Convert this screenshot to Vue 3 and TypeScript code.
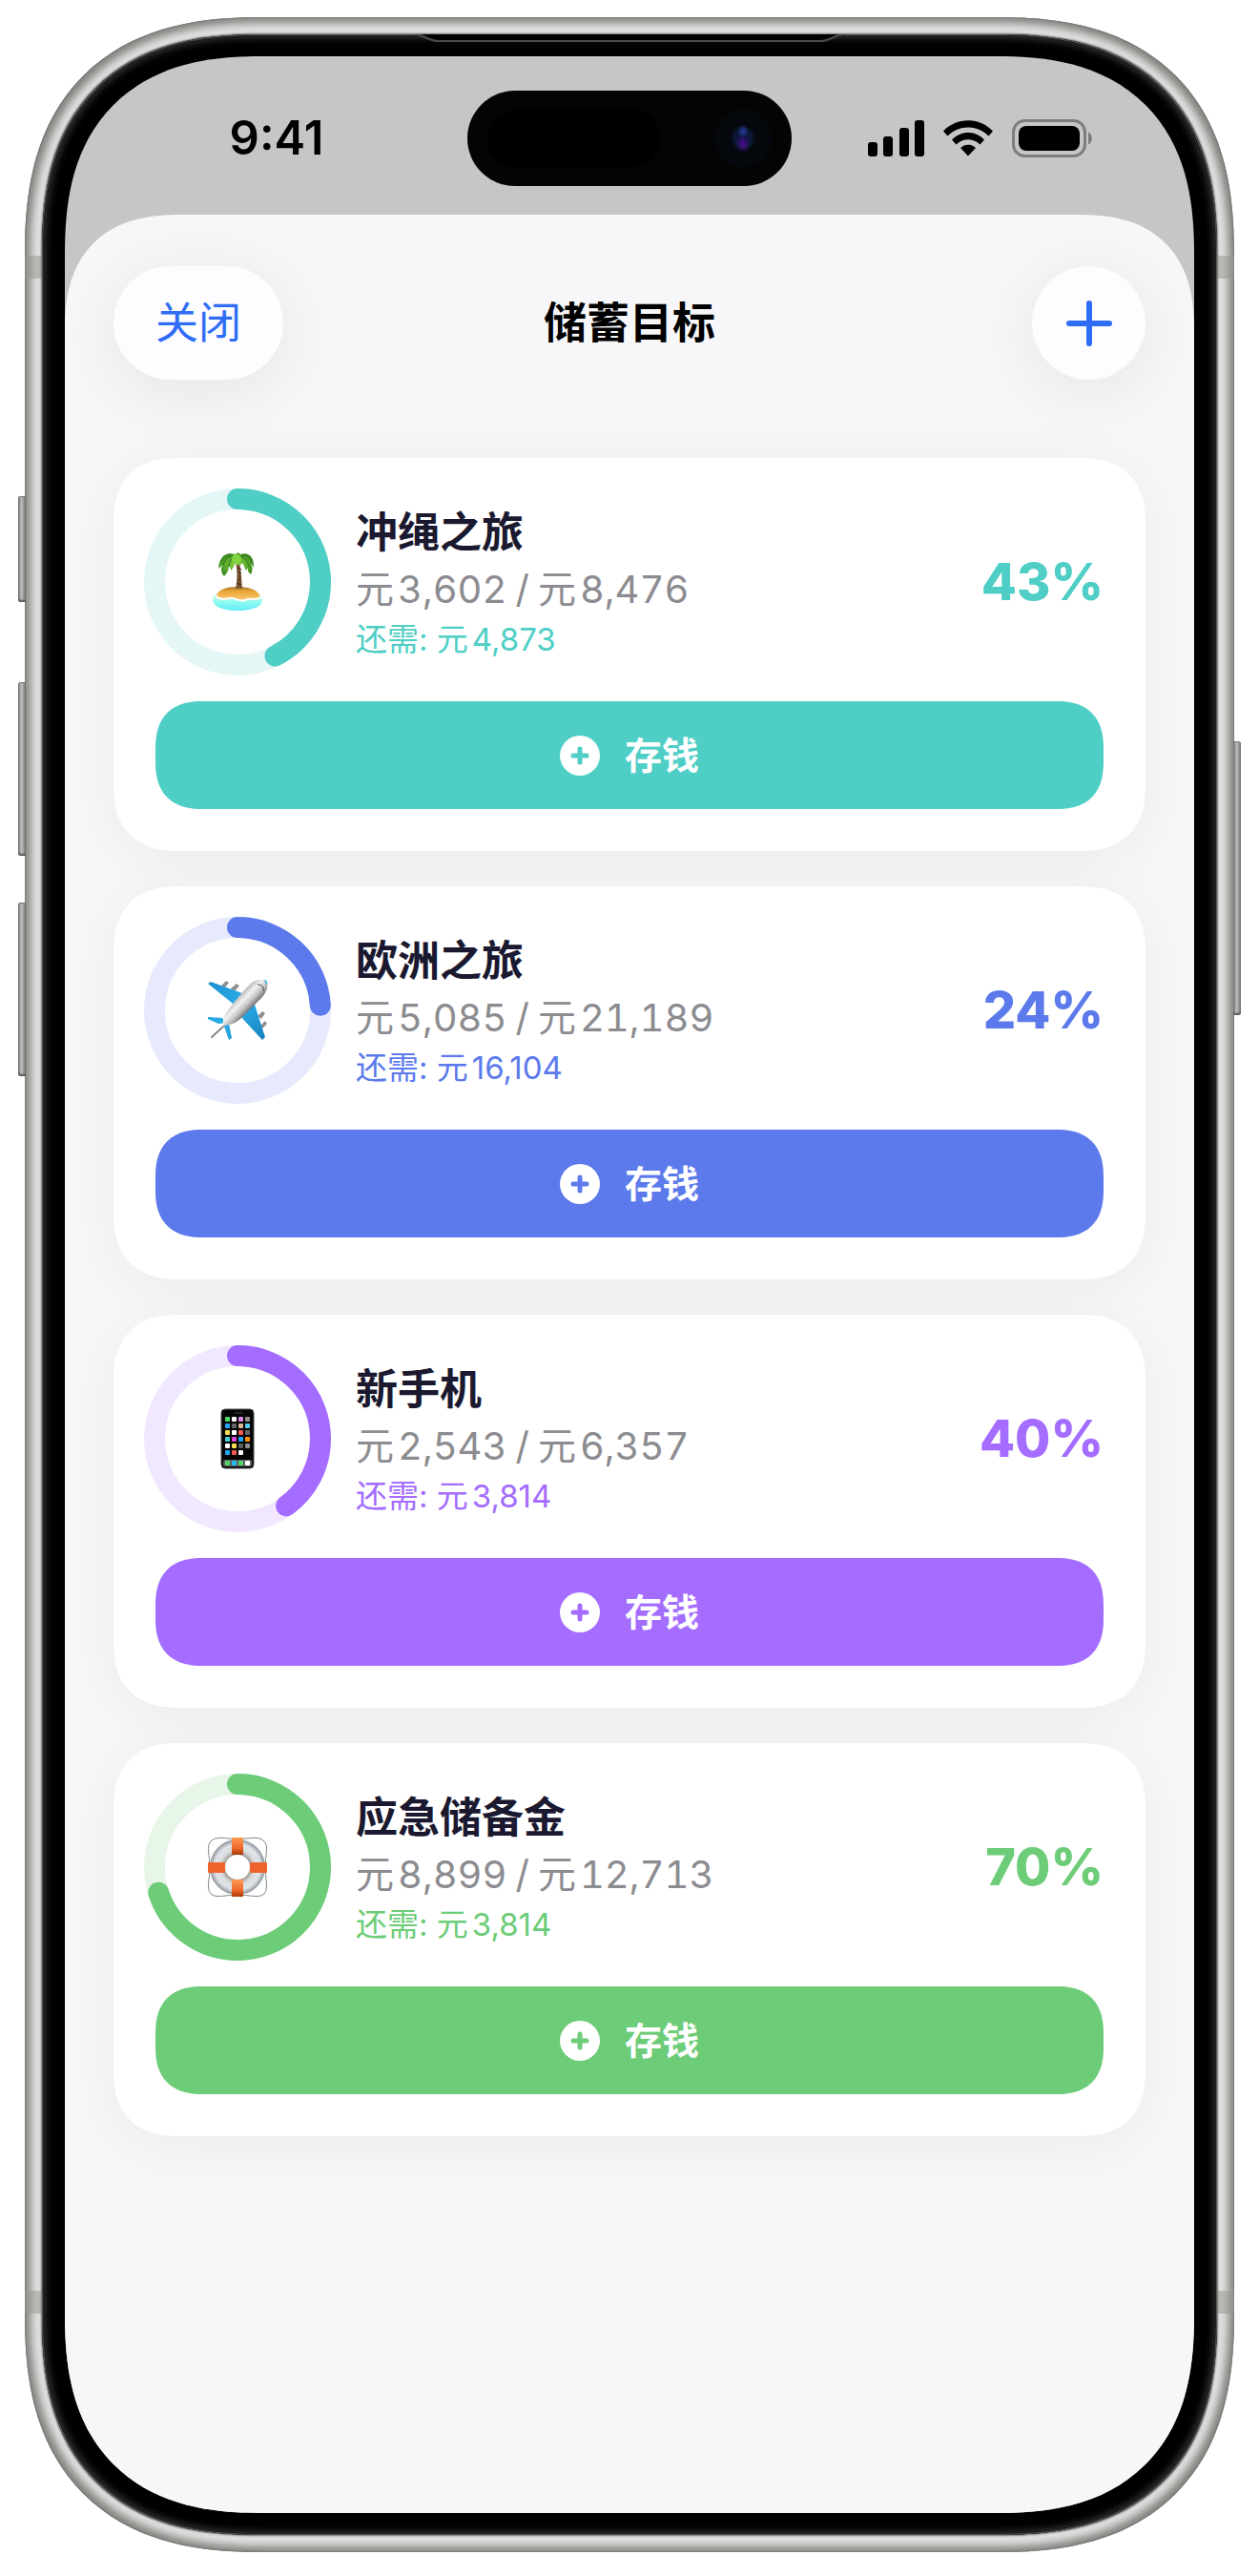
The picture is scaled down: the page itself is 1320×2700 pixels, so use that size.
<script setup lang="ts">
interface Goal {
  id: 'island' | 'plane' | 'phone' | 'buoy'
  name: string
  saved: number
  target: number
  left: number
  percent: number
  color: string
  track: string
}

const goals: Goal[] = [
  { id: 'island', name: '冲绳之旅', saved: 3602, target: 8476, left: 4873, percent: 43, color: '#4fcec6', track: '#e4f6f5' },
  { id: 'plane', name: '欧洲之旅', saved: 5085, target: 21189, left: 16104, percent: 24, color: '#5c7aeb', track: '#e6eafc' },
  { id: 'phone', name: '新手机', saved: 2543, target: 6357, left: 3814, percent: 40, color: '#a46dff', track: '#f1e8ff' },
  { id: 'buoy', name: '应急储备金', saved: 8899, target: 12713, left: 3814, percent: 70, color: '#6dcc78', track: '#e7f6e9' },
]

const money = (n: number): string => n.toLocaleString('en-US')
const arc = (g: Goal): string => `${(g.saved / g.target) * 100} 100`

const appColors: string[][] = [
  ['#4cd763', '#ffffff', '#dd8bea', '#909090'],
  ['#22a7f5', '#666666', '#d8b795', '#53cdf0'],
  ['#fbdc4e', '#ffffff', '#f4594f', '#666666'],
  ['#45cfd6', '#dd45dc', '#1ba6f7', '#ff9100'],
  ['#ffffff', '#fbdc4e', '#5c5c5c', '#8c8c8c'],
  ['#22a7f5', '#f4594f', '#ffffff'],
]
const dockColors: string[] = ['#4cd763', '#1fbdf5', '#4cd763', '#ffffff']
</script>

<template>
  <div class="page">
    <div class="device">
      <i class="key key-action"></i>
      <i class="key key-up"></i>
      <i class="key key-down"></i>
      <i class="key key-power"></i>
      <i class="band band-top"></i>
      <i class="band band-bottom"></i>
      <div class="bezel">
        <svg class="earpiece" viewBox="0 0 456 10" aria-hidden="true">
          <path d="M0 0H456C444 0 440 7 428 7H28C16 7 12 0 0 0Z" fill="#000" />
          <path d="M4 0C14 1 17 7 28 7H428C439 7 442 1 452 0" fill="none" stroke="#4a4a4a" stroke-width="2" />
        </svg>
        <div class="screen">
          <div class="status">
            <span class="time">9:41</span>
            <div class="island">
              <span class="sensor"></span>
              <span class="lens"></span>
            </div>
            <svg class="indicators" width="236" height="40" viewBox="0 0 236 40" aria-label="信号、无线网络、电池">
              <rect x="0" y="24" width="10" height="15" rx="3" />
              <rect x="16" y="18" width="10" height="21" rx="3" />
              <rect x="33" y="9" width="10" height="30" rx="3" />
              <rect x="49" y="1" width="10" height="38" rx="3" />
              <path d="M79 12.500C93-2.500 117-2.500 131 12.500L126.500 17.500C114.500 5.500 95.500 5.500 83.500 17.500Z" />
              <path d="M88 21.500C97.500 11.500 112.500 11.500 122 21.500L117.500 26.500C110.500 19.500 99.500 19.500 92.500 26.500Z" />
              <path d="M97 30C101.500 25.500 108.500 25.500 113 30L105 38.500Z" />
              <rect x="152.500" y="1.500" width="75" height="37" rx="12" fill="none" stroke="#7d7d7d" stroke-width="3" />
              <rect x="158" y="7" width="64" height="26" rx="8" />
              <path d="M231 13.500C236 15 236 25 231 26.500Z" fill="#7d7d7d" />
            </svg>
          </div>

          <main class="sheet">
            <header class="bar">
              <button type="button" class="glass close">关闭</button>
              <h1>储蓄目标</h1>
              <button type="button" class="glass add" aria-label="添加">
                <svg width="50" height="50" viewBox="0 0 50 50">
                  <path d="M25 4V46M4 25H46" stroke="#2f6df6" stroke-width="6" stroke-linecap="round" />
                </svg>
              </button>
            </header>

            <section class="goals">
              <article v-for="g in goals" :key="g.id" class="card" :style="{ '--tint': g.color, '--track': g.track }">
                <div class="summary">
                  <div class="ring">
                    <svg class="gauge" viewBox="0 0 172 172">
                      <circle class="gauge-track" cx="86" cy="86" r="87" />
                      <circle
                        class="gauge-fill"
                        cx="86"
                        cy="86"
                        r="87"
                        pathLength="100"
                        :stroke-dasharray="arc(g)"
                        transform="rotate(-90 86 86)"
                      />
                    </svg>

                    <svg v-if="g.id === 'island'" class="emoji" viewBox="0 0 64 64">
                      <defs>
                        <linearGradient id="sand" x1="0" y1="0" x2="0" y2="1">
                          <stop offset="0" stop-color="#a9742f" />
                          <stop offset=".35" stop-color="#eea836" />
                          <stop offset="1" stop-color="#f8c878" />
                        </linearGradient>
                        <linearGradient id="sea" x1="0" y1="0" x2="0" y2="1">
                          <stop offset="0" stop-color="#f4fbe0" />
                          <stop offset=".55" stop-color="#8ffbf0" />
                          <stop offset="1" stop-color="#62ecf8" />
                        </linearGradient>
                        <radialGradient id="leaf">
                          <stop offset="0" stop-color="#8ad640" />
                          <stop offset="1" stop-color="#3f8f22" />
                        </radialGradient>
                      </defs>
                      <path d="M6 50C6 44 16 42 32 42S58 44 58 51C58 58 47 62 32 62S6 58 6 50Z" fill="url(#sea)" />
                      <path d="M10 47C11 40 20 37 32 37S54 40 56 48C52 53 46 49 40 51C34 53 30 47 24 50C18 51 13 51 10 47Z" fill="url(#sand)" />
                      <path d="M9 47C14 51 19 50 25 49C31 49 34 53 40 51C46 48 50 52 57 48" fill="none" stroke="#fff" stroke-width="2" />
                      <path d="M30 12C32 20 32 30 30 39H37C36 29 36 20 34 11Z" fill="#7c5231" />
                      <path d="M32 17L36 19M32 21L36 23M32 25L36 27M32 29L36 31M31 33L36 35" stroke="#3d2a18" stroke-width="1" />
                      <path d="M30 3C19 0 13 6 12 18C14 16 15 15 16 14C14 19 15 23 18 26C22 22 23 18 23 15C24 17 25 18 25 20C28 17 29 14 29 12C31 15 36 15 37 12C39 15 40 18 41 20C42 18 43 17 43 15C42 19 43 22 46 24C48 20 48 16 46 13C48 14 49 16 49 18C50 6 44 0 35 3C33 1 32 1 30 3Z" fill="url(#leaf)" />
                      <path d="M17 14C18 9 22 5 27 5M23 16C23 10 26 6 30 6M44 16C42 9 39 5 34 5M25 3C20 3 16 7 15 11M37 4C42 3 46 7 47 12" fill="none" stroke="#2f7417" stroke-width="1" />
                      <circle cx="31" cy="8" r="5" fill="#82d340" />
                    </svg>

                    <svg v-else-if="g.id === 'plane'" class="emoji" viewBox="0 0 64 64">
                      <defs>
                        <linearGradient id="hull" x1="0" y1="0" x2="1" y2="1">
                          <stop offset=".35" stop-color="#b9b9b9" />
                          <stop offset=".45" stop-color="#f2f2f2" />
                          <stop offset=".54" stop-color="#c4c4c4" />
                          <stop offset=".64" stop-color="#6a6a6a" />
                        </linearGradient>
                        <linearGradient id="wing" x1="0" y1="0" x2="1" y2="1">
                          <stop offset="0" stop-color="#1d8fcd" />
                          <stop offset=".5" stop-color="#2aaeea" />
                          <stop offset="1" stop-color="#1680bd" />
                        </linearGradient>
                      </defs>
                      <path d="M15 6L20 1L23 3L19 8ZM25 9L31 4L34 6L29 12ZM53 38L58 33L61 35L57 41ZM56 48L61 43L63 46L58 51Z" fill="#8f8f8f" />
                      <path d="M1 4L4 2L40 15L31 28ZM49 23L61 60L58 63L35 38ZM1 39L16 40L20 45L12 46L1 41ZM17 46L23 46L26 61L23 63Z" fill="url(#wing)" />
                      <path d="M17 49L5 60" stroke="#888" stroke-width="2" stroke-linecap="round" />
                      <path d="M47 3C53 -1 60 -1 62 2C65 5 63 12 58 18L35 41C29 46 22 48 17 48C16 42 18 37 24 29C31 20 39 10 47 3Z" fill="url(#hull)" />
                      <path d="M53 5C58 5 60 8 59 12" fill="none" stroke="#444" stroke-width="1" />
                      <path d="M59 0C63 0 64 3 63 6C62 3 61 2 59 0Z" fill="#28aeea" />
                    </svg>

                    <svg v-else-if="g.id === 'phone'" class="emoji" viewBox="0 0 64 64">
                      <rect x="15" y="1" width="34" height="62" rx="4" fill="#050505" stroke="#4d4d4d" stroke-width="1" />
                      <rect x="29" y="4" width="9" height="2" rx="1" fill="#252525" />
                      <g v-for="(row, r) in appColors" :key="r">
                        <rect v-for="(c, i) in row" :key="i" :x="19 + i * 7" :y="9 + r * 7" width="5" height="5" rx="1" :fill="c" />
                      </g>
                      <rect x="17" y="54" width="30" height="7" rx="2" fill="#606060" />
                      <rect v-for="(c, i) in dockColors" :key="i" :x="19 + i * 7" y="55" width="5" height="5" rx="1" :fill="c" />
                    </svg>

                    <svg v-else class="emoji" viewBox="0 0 64 64">
                      <defs>
                        <radialGradient id="tube" gradientUnits="userSpaceOnUse" cx="32" cy="32" r="29">
                          <stop offset=".44" stop-color="#9a9693" />
                          <stop offset=".62" stop-color="#dcdcdc" />
                          <stop offset=".82" stop-color="#dfe5ec" />
                          <stop offset="1" stop-color="#8f9499" />
                        </radialGradient>
                        <linearGradient id="strap" x1="0" y1="0" x2="0" y2="1">
                          <stop offset="0" stop-color="#ff9a55" />
                          <stop offset=".6" stop-color="#f06a2c" />
                          <stop offset="1" stop-color="#a93808" />
                        </linearGradient>
                      </defs>
                      <path d="M32 3C20 2 9 -1 4 5C-1 10 3 20 3 32S-1 54 4 60C9 65 20 61 32 61S55 65 60 60C65 54 61 44 61 32S65 10 60 5C55 -1 44 2 32 3Z" fill="none" stroke="#858585" stroke-width="1" />
                      <circle cx="32" cy="32" r="21" fill="none" stroke="url(#tube)" stroke-width="16" />
                      <rect x="26" y="1" width="12" height="18" rx="1" fill="url(#strap)" />
                      <rect x="26" y="45" width="12" height="18" rx="1" fill="url(#strap)" />
                      <rect x="1" y="27" width="18" height="11" rx="1" fill="#ef642d" />
                      <rect x="45" y="27" width="18" height="11" rx="1" fill="#ef642d" />
                    </svg>
                  </div>

                  <div class="facts">
                    <h2>{{ g.name }}</h2>
                    <p class="amount">
                      <span class="yuan">元</span>{{ money(g.saved) }}<span class="slash">/</span><span class="yuan">元</span>{{ money(g.target) }}
                    </p>
                    <p class="remaining">还需: <span class="yuan">元</span>{{ money(g.left) }}</p>
                  </div>
                  <strong class="percent">{{ g.percent }}%</strong>
                </div>
                <button type="button" class="deposit">
                  <svg width="42" height="42" viewBox="0 0 42 42" aria-hidden="true">
                    <circle cx="21" cy="21" r="21" fill="#fff" />
                    <path d="M21 14V28M14 21H28" :stroke="g.color" stroke-width="5" stroke-linecap="round" />
                  </svg>
                  <span>存钱</span>
                </button>
              </article>
            </section>
          </main>
        </div>
      </div>
    </div>
  </div>
</template>

<style>
body {
  background: #fff;
}
</style>

<style scoped>
* {
  box-sizing: border-box;
}
.page {
  display: flex;
  min-height: 100vh;
  padding: 18px 26px 25px;
  font-family: Inter, "Noto Sans CJK SC", sans-serif;
}
h1,
h2,
p {
  margin: 0;
}
button {
  border: 0;
  font-family: inherit;
  cursor: pointer;
}
.device {
  position: relative;
  display: flex;
  flex: 1;
  padding: 18px;
  border-radius: 200px;
  background: #e0e0df;
  box-shadow: inset 0 0 0 1px #7c7c7a, inset 0 0 9px 6px #82827f;
}
.bezel {
  position: relative;
  display: flex;
  flex: 1;
  padding: 23px 24px;
  border-radius: 182px;
  background: #000;
  box-shadow: 0 0 2px 1px #6a6a6a, inset 0 0 0 1px #555, inset 0 0 0 2px #1c1c1c, inset 0 0 8px 3px #3c3c3c;
}
.screen {
  display: flex;
  flex: 1;
  flex-direction: column;
  overflow: hidden;
  border-radius: 160px;
  background: #c6c6c6;
}
.earpiece {
  position: absolute;
  top: 0;
  left: 50%;
  width: 456px;
  height: 10px;
  margin-left: -228px;
}
.key {
  position: absolute;
  left: -7px;
  width: 8px;
  border-radius: 3px 0 0 3px;
  background: linear-gradient(90deg, #777, #bdbdbc 45%, #777);
  box-shadow: inset 0 1px 1px #777, inset 0 -2px 2px #555;
}
.key-action {
  top: 502px;
  height: 111px;
}
.key-up {
  top: 697px;
  height: 182px;
}
.key-down {
  top: 928px;
  height: 182px;
}
.key-power {
  top: 759px;
  right: -7px;
  left: auto;
  height: 287px;
  border-radius: 0 3px 3px 0;
}
.band {
  position: absolute;
  right: 0;
  left: 0;
  height: 24px;
  background: rgba(150, 150, 140, 0.5);
}
.band-top {
  top: 250px;
}
.band-bottom {
  bottom: 250px;
}

.status {
  display: grid;
  grid-template-columns: 1fr 340px 1fr;
  align-items: center;
  height: 166px;
  padding-top: 6px;
}
.time {
  padding-left: 22px;
  font-size: 49px;
  font-weight: 600;
  line-height: 60px;
  text-align: center;
}
.island {
  display: flex;
  align-items: center;
  justify-content: space-between;
  height: 100px;
  padding: 0 21px;
  border-radius: 50px;
  background: #040404;
}
.sensor {
  width: 182px;
  height: 60px;
  border-radius: 30px;
  background: #000;
}
.lens {
  width: 60px;
  height: 60px;
  border-radius: 50%;
  background:
    radial-gradient(ellipse at 50% 38%, #233c96 0, rgba(20, 40, 90, 0) 14%),
    radial-gradient(ellipse at 50% 60%, #4a0c90 0, rgba(60, 10, 120, 0) 18%),
    radial-gradient(circle, #130a3c 0, #0d1a38 20%, #04080d 32%, #04070b 100%);
}
.indicators {
  justify-self: center;
  margin-right: 26px;
}

.sheet {
  flex: 1;
  padding: 54px 51px;
  border-radius: 96px 96px 0 0;
  background: #f7f7fa;
}
.bar {
  display: grid;
  grid-template-columns: 1fr auto 1fr;
  align-items: center;
  margin-bottom: 82px;
}
.bar h1 {
  font-size: 45px;
  font-weight: 600;
  line-height: 60px;
}
.glass {
  display: flex;
  align-items: center;
  justify-content: center;
  height: 119px;
  border-radius: 60px;
  background: #fdfdff;
  box-shadow: 0 12px 70px rgba(0, 0, 0, 0.08);
  color: #2f6df6;
}
.close {
  justify-self: start;
  padding: 0 44px;
  font-size: 45px;
  line-height: 60px;
}
.add {
  justify-self: end;
  width: 119px;
  padding: 0;
}
.goals {
  display: flex;
  flex-direction: column;
  gap: 37px;
}
.card {
  padding: 44px;
  border-radius: 50px;
  background: #fff;
  box-shadow: 0 10px 60px rgba(0, 0, 0, 0.05);
}
.summary {
  display: flex;
  align-items: center;
  gap: 38px;
  height: 172px;
  margin-bottom: 39px;
}
.ring {
  display: grid;
  flex: none;
  place-items: center;
  width: 172px;
  height: 172px;
}
.ring > * {
  grid-area: 1 / 1;
}
.gauge {
  width: 172px;
  height: 172px;
  overflow: visible;
  fill: none;
  stroke-width: 22px;
}
.gauge-track {
  stroke: var(--track);
}
.gauge-fill {
  stroke: var(--tint);
  stroke-linecap: round;
}
.emoji {
  width: 64px;
  height: 64px;
}
.facts {
  flex: 1;
}
.facts h2 {
  color: #1a1930;
  font-size: 44px;
  font-weight: 700;
  line-height: 60px;
}
.amount {
  color: #8c8c90;
  font-size: 40px;
  font-variant-numeric: tabular-nums;
  line-height: 60px;
}
.remaining {
  color: var(--tint);
  font-size: 33px;
  line-height: 44px;
}
.yuan {
  margin-right: 4px;
}
.slash {
  margin: 0 9px;
}
.percent {
  color: var(--tint);
  font-size: 54px;
  font-weight: 800;
  line-height: 60px;
}
.deposit {
  display: flex;
  align-items: center;
  justify-content: center;
  gap: 26px;
  width: 100%;
  height: 113px;
  border-radius: 36px;
  background: var(--tint);
  color: #fff;
  font-size: 39px;
  font-weight: 700;
  line-height: 60px;
}

/* Smooth, continuous corners where the browser can draw them */
@supports (corner-shape: superellipse(1.3)) {
  .device,
  .bezel,
  .screen,
  .sheet,
  .card,
  .deposit {
    corner-shape: superellipse(1.3);
  }
  .device {
    border-radius: 250px;
  }
  .bezel {
    border-radius: 230px;
  }
  .screen {
    border-radius: 208px;
  }
  .sheet {
    border-radius: 122px 122px 0 0;
    corner-shape: superellipse(1.3) superellipse(1.3) square square;
  }
  .card {
    border-radius: 70px;
  }
  .deposit {
    border-radius: 50px;
  }
}
</style>
